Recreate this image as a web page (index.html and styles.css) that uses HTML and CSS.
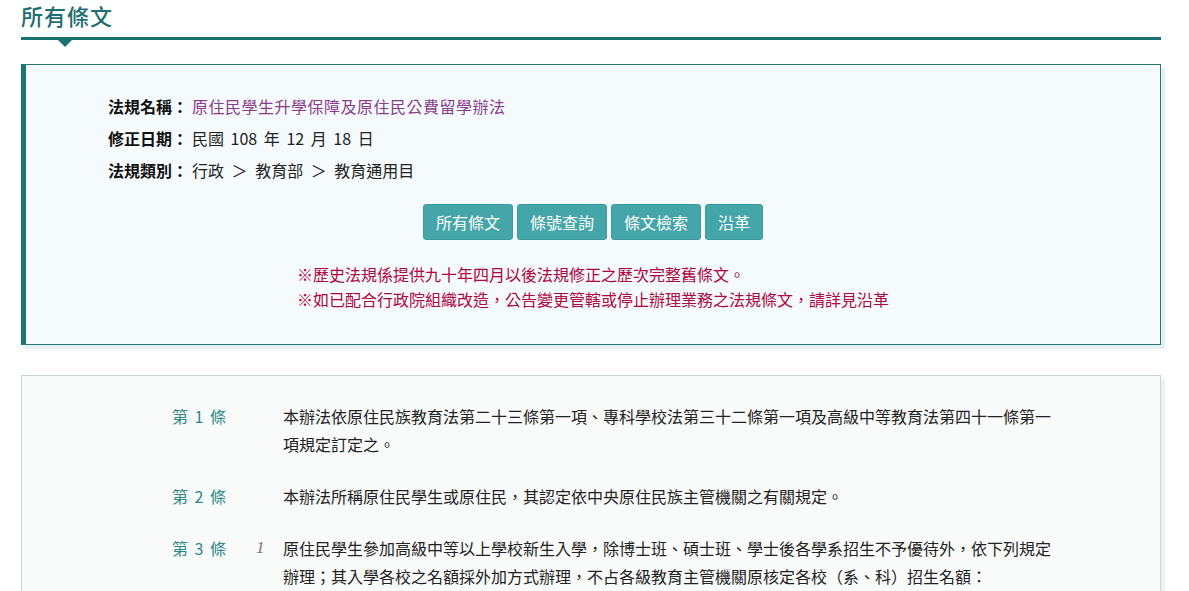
FILE: index.html
```html
<!DOCTYPE html>
<html lang="zh-Hant">
<head>
<meta charset="utf-8">
<title>所有條文</title>
<link rel="stylesheet" href="styles.css">
</head>
<body>
<div class="page">
  <h2 class="page-title">所有條文</h2>

  <section class="law-info">
    <div class="info-rows">
      <div class="info-row"><span class="info-label">法規名稱：</span><a class="law-name" href="#">原住民學生升學保障及原住民公費留學辦法</a></div>
      <div class="info-row"><span class="info-label">修正日期：</span><span class="spaced">民國 108 年 12 月 18 日</span></div>
      <div class="info-row"><span class="info-label">法規類別：</span><span class="crumbs">行政 ＞ 教育部 ＞ 教育通用目</span></div>
    </div>
    <div class="btn-group">
      <a class="btn" href="#">所有條文</a>
      <a class="btn" href="#">條號查詢</a>
      <a class="btn" href="#">條文檢索</a>
      <a class="btn" href="#">沿革</a>
    </div>
    <div class="notes">
      <ul class="note-list">
        <li>※歷史法規係提供九十年四月以後法規修正之歷次完整舊條文。</li>
        <li>※如已配合行政院組織改造，公告變更管轄或停止辦理業務之法規條文，請詳見沿革</li>
      </ul>
    </div>
  </section>

  <section class="articles">
    <div class="article">
      <div class="art-no">第 1 條</div>
      <div class="art-item"></div>
      <div class="art-text">本辦法依原住民族教育法第二十三條第一項、專科學校法第三十二條第一項及高級中等教育法第四十一條第一項規定訂定之。</div>
    </div>
    <div class="article">
      <div class="art-no">第 2 條</div>
      <div class="art-item"></div>
      <div class="art-text">本辦法所稱原住民學生或原住民，其認定依中央原住民族主管機關之有關規定。</div>
    </div>
    <div class="article">
      <div class="art-no">第 3 條</div>
      <div class="art-item">1</div>
      <div class="art-text">原住民學生參加高級中等以上學校新生入學，除博士班、碩士班、學士後各學系招生不予優待外，依下列規定辦理；其入學各校之名額採外加方式辦理，不占各級教育主管機關原核定各校（系、科）招生名額：</div>
    </div>
  </section>
</div>
</body>
</html>
```

FILE: styles.css
```css
* { box-sizing: border-box; }

html, body {
  margin: 0;
  padding: 0;
  background: #ffffff;
}

body {
  font-family: "Noto Sans CJK TC", "Liberation Sans", sans-serif;
  font-size: 16px;
  color: #222;
  height: 591px;
  overflow: hidden;
}

.page {
  width: 1140px;
  margin-left: 21px;
}

.page-title {
  position: relative;
  margin: 0;
  padding: 0 0 6px 0;
  height: 40px;
  font-size: 22px;
  line-height: 30px;
  font-weight: 500;
  color: #1f6f70;
  letter-spacing: 1px;
  border-bottom: 3px solid #1b7370;
}

.page-title::after {
  content: "";
  position: absolute;
  left: 37px;
  bottom: -10px;
  width: 0;
  height: 0;
  border-left: 7px solid transparent;
  border-right: 7px solid transparent;
  border-top: 7px solid #1b7370;
}

.law-info {
  margin-top: 24px;
  background: #f5fbfc;
  border: 1px solid #2a7775;
  border-left: 5px solid #1d7572;
  box-shadow: 4px 4px 0 #e3f1f2;
  padding: 25px 20px 31px 82px;
  height: 281px;
}

.info-row {
  line-height: 32px;
  height: 32px;
  color: #222;
}

.info-label {
  font-weight: 700;
  color: #111;
  margin-right: 4px;
}

.spaced {
  word-spacing: 3px;
}

.crumbs {
  word-spacing: 4px;
}

.law-name {
  color: #8a3c8c;
  text-decoration: none;
  letter-spacing: 0.5px;
}

.btn-group {
  display: flex;
  justify-content: center;
  gap: 4px;
  margin-top: 18px;
  margin-left: -62px;
}

.btn {
  display: block;
  height: 36px;
  line-height: 34px;
  padding: 0 12px;
  background: #45a6a9;
  border: 1px solid #3b9a9d;
  border-radius: 3px;
  color: #ffffff;
  text-decoration: none;
  font-size: 16px;
}

.notes {
  display: flex;
  justify-content: center;
  margin-top: 22px;
  margin-left: -62px;
}

.note-list {
  list-style: none;
  margin: 0;
  padding: 0;
  color: #b0053e;
  line-height: 25px;
  font-size: 16px;
}

.articles {
  margin-top: 30px;
  background: #f9fafa;
  border: 1px solid #c9d6d5;
  box-shadow: 4px 4px 0 #eef2f2;
  padding: 26px 0 40px 150px;
  min-height: 260px;
}

.article {
  display: flex;
  line-height: 28px;
  margin-bottom: 24px;
}

.art-no {
  width: 84px;
  flex: none;
  color: #2a8886;
  white-space: pre;
  word-spacing: 3px;
}

.art-item {
  width: 27px;
  flex: none;
  color: #777;
  font-style: italic;
  font-family: "Liberation Serif", serif;
  font-size: 17px;
}

.art-text {
  width: 772px;
  color: #222;
}
```
